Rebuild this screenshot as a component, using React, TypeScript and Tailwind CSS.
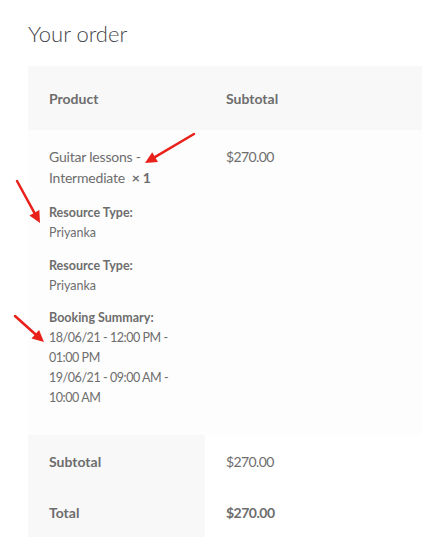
import React from 'react';

const Arrow = ({ x1, y1, x2, y2 }: { x1: number; y1: number; x2: number; y2: number }) => {
    const a = Math.atan2(y2 - y1, x2 - x1);
    const l = 13;
    const w = 0.45;
    const p1 = [x2 - l * Math.cos(a - w), y2 - l * Math.sin(a - w)];
    const p2 = [x2 - l * Math.cos(a + w), y2 - l * Math.sin(a + w)];
    const bx = x2 - 9 * Math.cos(a);
    const by = y2 - 9 * Math.sin(a);
    return (
        <g>
            <line x1={x1} y1={y1} x2={bx} y2={by} stroke="#e8211b" strokeWidth={2.5} strokeLinecap="round" />
            <polygon points={`${x2},${y2} ${p1[0]},${p1[1]} ${p2[0]},${p2[1]}`} fill="#e8211b" />
        </g>
    );
};

export default function App() {
    return (
        <div className="relative w-[447px] h-[549px] bg-white text-[#6d6d6d]" style={{ fontFamily: 'Lato, "Open Sans", sans-serif' }}>
            <div className="pt-[21px] pl-[28px]">
                <h2 className="text-[22px] font-light text-[#43454b] leading-[26px]">Your order</h2>
            </div>

            <div className="mt-[19px] ml-[28px] w-[394px] grid grid-cols-[177px_217px]">
                {/* header */}
                <div className="bg-[#f8f8f8] h-[64px] flex items-center pl-[21px] text-[14px] font-bold">Product</div>
                <div className="bg-[#f8f8f8] h-[64px] flex items-center pl-[21px] text-[14px] font-bold">Subtotal</div>

                {/* body */}
                <div className="bg-[#fdfdfd] pl-[21px] pt-[16px] pb-[27px]">
                    <div className="text-[14px] leading-[21px] tracking-[-0.2px]">
                        Guitar lessons -<br />
                        Intermediate&nbsp; <strong className="font-bold">× 1</strong>
                    </div>
                    <div className="text-[12.5px] leading-[20px] mt-[15px]">
                        <div className="font-bold">Resource Type:</div>
                        <div>Priyanka</div>
                    </div>
                    <div className="text-[12.5px] leading-[20px] mt-[13px]">
                        <div className="font-bold">Resource Type:</div>
                        <div>Priyanka</div>
                    </div>
                    <div className="text-[12.5px] leading-[20px] mt-[12px]">
                        <div className="font-bold">Booking Summary:</div>
                        <div className="tracking-[-0.45px]">18/06/21 - 12:00 PM -</div>
                        <div className="tracking-[-0.45px]">01:00 PM</div>
                        <div className="tracking-[-0.45px]">19/06/21 - 09:00 AM -</div>
                        <div className="tracking-[-0.45px]">10:00 AM</div>
                    </div>
                </div>
                <div className="bg-[#fdfdfd] pl-[21px] pt-[16px] text-[14px] leading-[21px] tracking-[-0.6px]">$270.00</div>

                {/* totals */}
                <div className="bg-[#f8f8f8] h-[52px] flex items-center pl-[21px] text-[14px] font-bold">Subtotal</div>
                <div className="bg-white h-[52px] flex items-center pl-[21px] text-[14px] tracking-[-0.6px]">$270.00</div>
                <div className="bg-[#f8f8f8] h-[50px] flex items-center pl-[21px] text-[14px] font-bold">Total</div>
                <div className="bg-white h-[50px] flex items-center pl-[21px] text-[14px] font-bold tracking-[-0.5px]">$270.00</div>
            </div>

            <svg className="absolute inset-0 pointer-events-none" width={447} height={549}>
                <Arrow x1={194} y1={134} x2={145} y2={163} />
                <Arrow x1={17} y1={181} x2={40} y2={223} />
                <Arrow x1={15} y1={316} x2={44} y2={342} />
            </svg>
        </div>
    );
}
